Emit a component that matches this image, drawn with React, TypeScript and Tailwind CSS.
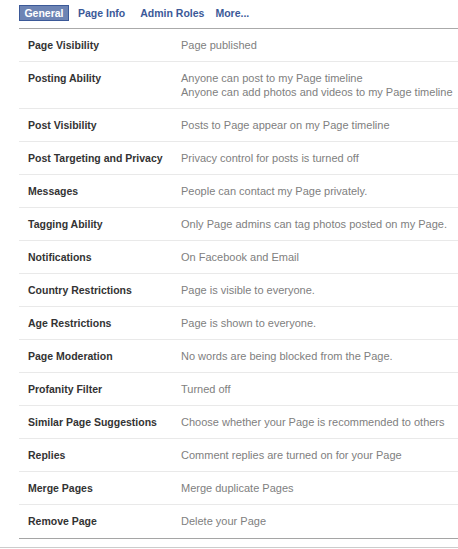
import React from "react";

const rows: [string, string[]][] = [
  ["Page Visibility", ["Page published"]],
  ["Posting Ability", ["Anyone can post to my Page timeline", "Anyone can add photos and videos to my Page timeline"]],
  ["Post Visibility", ["Posts to Page appear on my Page timeline"]],
  ["Post Targeting and Privacy", ["Privacy control for posts is turned off"]],
  ["Messages", ["People can contact my Page privately."]],
  ["Tagging Ability", ["Only Page admins can tag photos posted on my Page."]],
  ["Notifications", ["On Facebook and Email"]],
  ["Country Restrictions", ["Page is visible to everyone."]],
  ["Age Restrictions", ["Page is shown to everyone."]],
  ["Page Moderation", ["No words are being blocked from the Page."]],
  ["Profanity Filter", ["Turned off"]],
  ["Similar Page Suggestions", ["Choose whether your Page is recommended to others"]],
  ["Replies", ["Comment replies are turned on for your Page"]],
  ["Merge Pages", ["Merge duplicate Pages"]],
  ["Remove Page", ["Delete your Page"]],
];

export default function App() {
  return (
    <div className="w-[458px] h-[549px] bg-white overflow-hidden text-[11px] leading-[14px]" style={{ fontFamily: '"Liberation Sans", Arial, sans-serif' }}>
      <div className="pl-[19px]">
        <div className="flex items-center h-[29px] pb-[3px] border-b border-[#aaaaaa] font-bold text-[10.5px]">
          <div className="bg-[#6d84b4] border border-[#3b5998] text-white h-[16px] leading-[14px] w-[50px] text-center mt-[1px]">General</div>
          <div className="text-[#3b5998] ml-[9px]">Page Info</div>
          <div className="text-[#3b5998] ml-[15px]">Admin Roles</div>
          <div className="text-[#3b5998] ml-[11px]">More...</div>
        </div>
        <div className="border-b border-[#a5a5a5]">
          {rows.map(([label, vals], i) => (
            <div key={label} className={`flex pt-[9px] ${vals.length > 1 ? "h-[47px]" : "h-[33px]"} ${i < rows.length - 1 ? "border-b border-[#e9e9e9]" : ""}`}>
              <div className="w-[162px] pl-[9px] font-bold text-[10.5px] text-[#333333]">{label}</div>
              <div className="text-[#808080]">
                {vals.map((v) => (
                  <div key={v}>{v}</div>
                ))}
              </div>
            </div>
          ))}
        </div>
      </div>
      <div className="mt-[8px] border-t border-[#cccccc]" />
    </div>
  );
}
